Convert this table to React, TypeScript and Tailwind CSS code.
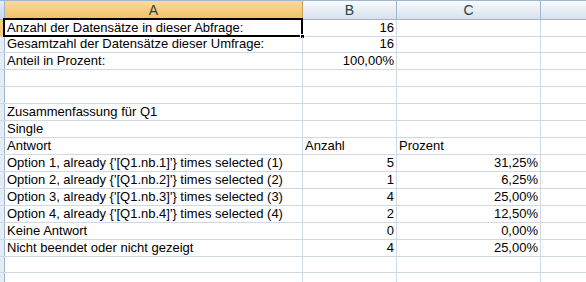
import React from 'react';

type Row = {
  a?: string;
  b?: string;
  c?: string;
  bAlign?: 'left' | 'right';
  cAlign?: 'left' | 'right';
  short?: boolean;
};

const sheet: Row[] = [
  { a: 'Anzahl der Datensätze in dieser Abfrage:', b: '16' },
  { a: 'Gesamtzahl der Datensätze dieser Umfrage:', b: '16', short: true },
  { a: 'Anteil in Prozent:', b: '100,00%' },
  {},
  {},
  { a: 'Zusammenfassung für Q1' },
  { a: 'Single' },
  { a: 'Antwort', b: 'Anzahl', c: 'Prozent', bAlign: 'left', cAlign: 'left' },
  { a: "Option 1, already {'[Q1.nb.1]'} times selected (1)", b: '5', c: '31,25%' },
  { a: "Option 2, already {'[Q1.nb.2]'} times selected (2)", b: '1', c: '6,25%' },
  { a: "Option 3, already {'[Q1.nb.3]'} times selected (3)", b: '4', c: '25,00%' },
  { a: "Option 4, already {'[Q1.nb.4]'} times selected (4)", b: '2', c: '12,50%' },
  { a: 'Keine Antwort', b: '0', c: '0,00%' },
  { a: 'Nicht beendet oder nicht gezeigt', b: '4', c: '25,00%' },
  { short: true },
  {},
];

const Cell: React.FC<{ text?: string; align?: 'left' | 'right'; width: string; selected?: boolean }> = ({
  text,
  align = 'left',
  width,
  selected,
}) => (
  <div
    className={`relative flex items-end border-r border-[#d0d7e5] px-[2px] leading-[16px] whitespace-nowrap ${width} ${
      align === 'right' ? 'justify-end' : 'justify-start'
    }`}
  >
    {text}
    {selected && (
      <>
        <div className="pointer-events-none absolute -left-[2px] -top-[2px] -right-[1px] -bottom-[1px] border-2 border-black" />
        <div className="absolute -bottom-[3px] -right-[3px] h-[5px] w-[5px] border border-white bg-black" />
      </>
    )}
  </div>
);

export default function App() {
  return (
    <div
      className="h-[282px] w-[586px] overflow-hidden bg-white text-[13px] text-black"
      style={{ fontFamily: '"Liberation Sans", Arial, sans-serif' }}
    >
      {/* column headers */}
      <div className="flex h-[20px] border-t border-[#9eb6ce] border-b border-b-[#9eb6ce] text-[14px] text-[#27413e]">
        <div className="w-[5px] border-r border-[#9eb6ce] bg-gradient-to-b from-[#e4ecf7] to-[#c6d6ec]" />
        <div className="flex w-[298px] items-center justify-center border-r border-[#c5a15c] bg-gradient-to-b from-[#f9d99f] to-[#f1c15f]">
          A
        </div>
        <div className="flex w-[94px] items-center justify-center border-r border-[#9eb6ce] bg-gradient-to-b from-[#f8fafd] to-[#d8e1ee]">
          B
        </div>
        <div className="flex w-[144px] items-center justify-center border-r border-[#9eb6ce] bg-gradient-to-b from-[#f8fafd] to-[#d8e1ee]">
          C
        </div>
        <div className="flex-1 bg-gradient-to-b from-[#f8fafd] to-[#d8e1ee]" />
      </div>

      {sheet.map((row, i) => (
        <div
          key={i}
          className={`flex border-b border-[#d0d7e5] ${row.short ? 'h-[16px]' : 'h-[17px]'}`}
        >
          <div
            className={`w-[5px] border-r border-[#9eb6ce] ${
              i === 0 ? 'bg-[#f5c977]' : 'bg-[#e4ecf7]'
            }`}
          />
          <Cell text={row.a} width="w-[298px]" selected={i === 0} />
          <Cell text={row.b} width="w-[94px]" align={row.bAlign ?? 'right'} />
          <Cell text={row.c} width="w-[144px]" align={row.cAlign ?? 'right'} />
          <div className="flex-1" />
        </div>
      ))}
    </div>
  );
}
